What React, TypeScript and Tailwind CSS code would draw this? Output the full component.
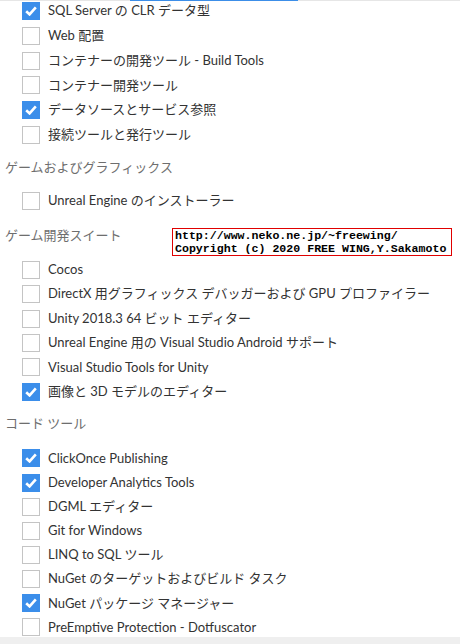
import React from "react";

type Item = { label: string; checked?: boolean };
type Group = { title?: string; head?: string; row: string; items: Item[] };

const groups: Group[] = [
    {
        row: "h-[24.8px]",
        items: [
            { label: "SQL Server の CLR データ型", checked: true },
            { label: "Web 配置" },
            { label: "コンテナーの開発ツール - Build Tools" },
            { label: "コンテナー開発ツール" },
            { label: "データソースとサービス参照", checked: true },
            { label: "接続ツールと発行ツール" },
        ],
    },
    {
        title: "ゲームおよびグラフィックス",
        head: "h-[41.5px]",
        row: "h-[24.15px]",
        items: [{ label: "Unreal Engine のインストーラー" }],
    },
    {
        title: "ゲーム開発スイート",
        head: "h-[44.5px]",
        row: "h-[24.4px]",
        items: [
            { label: "Cocos" },
            { label: "DirectX 用グラフィックス デバッガーおよび GPU プロファイラー" },
            { label: "Unity 2018.3 64 ビット エディター" },
            { label: "Unreal Engine 用の Visual Studio Android サポート" },
            { label: "Visual Studio Tools for Unity" },
            { label: "画像と 3D モデルのエディター", checked: true },
        ],
    },
    {
        title: "コード ツール",
        head: "h-[42.5px] pb-[3px]",
        row: "h-[24.15px]",
        items: [
            { label: "ClickOnce Publishing", checked: true },
            { label: "Developer Analytics Tools", checked: true },
            { label: "DGML エディター" },
            { label: "Git for Windows" },
            { label: "LINQ to SQL ツール" },
            { label: "NuGet のターゲットおよびビルド タスク" },
            { label: "NuGet パッケージ マネージャー", checked: true },
            { label: "PreEmptive Protection - Dotfuscator" },
        ],
    },
];

const Check: React.FC<{ checked?: boolean }> = ({ checked }) =>
    checked ? (
        <span className="flex h-[18px] w-[18px] shrink-0 items-center justify-center bg-[#3b8eea]">
            <svg width="12" height="10" viewBox="0 0 12 10">
                <path d="M1.2 5.2 L4.6 8.4 L10.8 1.4" fill="none" stroke="#fff" strokeWidth="2.6" />
            </svg>
        </span>
    ) : (
        <span className="h-[18px] w-[18px] shrink-0 border border-[#c4c4c4] bg-white" />
    );

export default function App() {
    return (
        <div className="relative h-[644px] w-[460px] overflow-hidden bg-white font-['Lato','Noto_Sans_CJK_JP',sans-serif]">
            <div className="-mt-[1.4px] flex flex-col">
                {groups.map((g, gi) => (
                    <div key={gi} className="flex flex-col">
                        {g.title && (
                            <div className={`flex items-center pl-[5px] text-[13px] text-[#6e6e6e] ${g.head}`}>
                                {g.title}
                            </div>
                        )}
                        {g.items.map((it, i) => (
                            <div key={i} className={`flex items-center gap-[8px] pl-[22px] text-[13px] text-[#333] ${g.row}`}>
                                <Check checked={it.checked} />
                                <span className="whitespace-nowrap">{it.label}</span>
                            </div>
                        ))}
                    </div>
                ))}
            </div>
            <div className="absolute left-0 top-0 flex h-px w-full bg-[#e6e6e6]">
                <div className="ml-[130px] h-px w-[168px] bg-[#3c8ee8]" />
            </div>
            <div className="absolute bottom-0 left-0 h-[7px] w-full bg-[#efefef]" />
            <div className="absolute left-[172px] top-[228px] w-[280px] border border-[#e00000] bg-white px-[2px] font-['Liberation_Mono',monospace] text-[11.6px] font-bold leading-[13px] text-black">
                <div>http://www.neko.ne.jp/~freewing/</div>
                <div>Copyright (c) 2020 FREE WING,Y.Sakamoto</div>
            </div>
        </div>
    );
}
